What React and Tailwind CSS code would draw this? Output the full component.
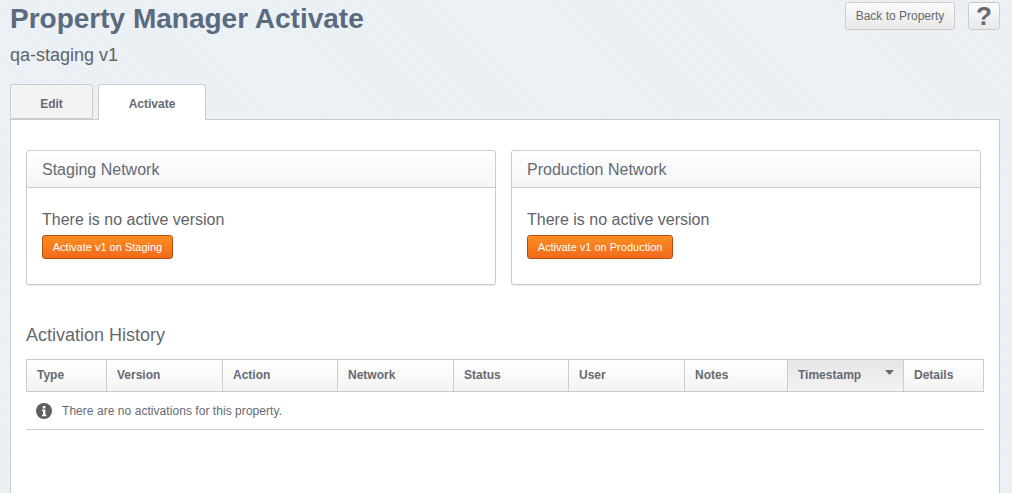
import React from 'react';

const columns = [
    { label: 'Type', width: 'w-[80px]' },
    { label: 'Version', width: 'w-[116px]' },
    { label: 'Action', width: 'w-[115px]' },
    { label: 'Network', width: 'w-[116px]' },
    { label: 'Status', width: 'w-[115px]' },
    { label: 'User', width: 'w-[116px]' },
    { label: 'Notes', width: 'w-[103px]' },
    { label: 'Timestamp', width: 'w-[116px]', sorted: true },
    { label: 'Details', width: 'flex-1' },
];

const NetworkCard = ({ title, buttonLabel, buttonWidth }) => (
    <div className="w-[470px] h-[135px] bg-white rounded-[3px] border border-[#cccccc] shadow-[0_1px_1px_rgba(0,0,0,0.08)]">
        <div className="h-[37px] border-b border-[#cccccc] pl-[15px] bg-gradient-to-b from-white to-[#f5f5f5] rounded-t-[3px] text-[16px] leading-[37px] text-[#666a73]">
            {title}
        </div>
        <div className="pl-[15px] pt-[22px]">
            <p className="text-[16px] leading-[20px] text-[#5f6369]">There is no active version</p>
            <button className={`${buttonWidth} h-[24px] mt-[5px] block rounded-[3px] border border-[#b5500c] bg-gradient-to-b from-[#fb8d22] to-[#f26a1c] text-white text-[11px] leading-[22px] text-center`}>
                {buttonLabel}
            </button>
        </div>
    </div>
);

const App = () => {
    return (
        <div className="w-[1012px] h-[493px] overflow-hidden font-['Liberation_Sans',Arial,sans-serif] bg-[#e9eff4] bg-[repeating-linear-gradient(45deg,#e7edf2_0px,#e7edf2_1px,#edf2f6_1px,#edf2f6_3px)]">
            {/* Header */}
            <div className="flex justify-between h-[84px] pl-[10px] pr-[12px]">
                <div>
                    <h1 className="text-[28px] leading-[38px] font-bold text-[#5a6b7f]">Property Manager Activate</h1>
                    <p className="text-[18px] leading-[22px] mt-[6px] text-[#60646a]">qa-staging v1</p>
                </div>
                <div className="flex gap-[13px] pt-[2px] items-start">
                    <button className="w-[110px] h-[28px] rounded-[3px] border border-[#cccccc] bg-gradient-to-b from-[#fbfbfb] to-[#e8e8e8] text-[12px] text-[#666a70]">
                        Back to Property
                    </button>
                    <button className="w-[32px] h-[28px] rounded-[3px] border border-[#cccccc] bg-gradient-to-b from-[#fbfbfb] to-[#e8e8e8] text-[26px] leading-[26px] font-bold text-[#666a70]">
                        ?
                    </button>
                </div>
            </div>

            {/* Tabs */}
            <div className="flex gap-[5px] h-[35px] pl-[10px] relative z-10">
                <div className="w-[83px] h-[35px] rounded-t-[3px] border border-[#cccccc] bg-[#f3f3f3] text-[12px] leading-[38px] font-bold text-center text-[#666a73]">
                    Edit
                </div>
                <div className="w-[108px] h-[36px] rounded-t-[3px] border border-b-0 border-[#cccccc] bg-white text-[12px] leading-[38px] font-bold text-center text-[#666a73]">
                    Activate
                </div>
            </div>

            {/* Panel */}
            <div className="ml-[10px] w-[990px] h-[400px] bg-white border border-[#cccccc] pl-[15px] pt-[30px]">
                <div className="flex gap-[15px]">
                    <NetworkCard title="Staging Network" buttonLabel="Activate v1 on Staging" buttonWidth="w-[131px]" />
                    <NetworkCard title="Production Network" buttonLabel="Activate v1 on Production" buttonWidth="w-[146px]" />
                </div>

                <h2 className="text-[18px] leading-[22px] mt-[39px] text-[#666a70]">Activation History</h2>

                {/* Table */}
                <div className="w-[958px] mt-[13px]">
                    <div className="flex h-[33px] border border-[#cccccc] bg-gradient-to-b from-white to-[#f3f3f3]">
                        {columns.map((col, i) => (
                            <div
                                key={col.label}
                                className={`${col.width} ${i < columns.length - 1 ? 'border-r border-[#cccccc]' : ''} ${col.sorted ? 'bg-gradient-to-b from-[#e6e6e6] to-[#f3f3f3] flex justify-between pr-[9px]' : ''} pl-[10px] text-[12px] leading-[31px] font-bold text-[#666a73]`}
                            >
                                <span>{col.label}</span>
                                {col.sorted && (
                                    <svg className="w-[9px] h-[5px] mt-[10px]" viewBox="0 0 9 5">
                                        <path d="M0 0h9L4.5 5z" fill="#666a70" />
                                    </svg>
                                )}
                            </div>
                        ))}
                    </div>
                    <div className="flex items-center h-[38px] pl-[10px] border-b border-[#cccccc]">
                        <svg className="w-[16px] h-[16px]" viewBox="0 0 16 16">
                            <circle cx="8" cy="8" r="8" fill="#5f5f5f" />
                            <rect x="6.8" y="3" width="2.6" height="2.4" fill="#ffffff" />
                            <path d="M6 6.6h3.4v5.2h1v1.4H6v-1.4h1V8H6z" fill="#ffffff" />
                        </svg>
                        <span className="ml-[10px] text-[12px] tracking-[0.05px] text-[#666a70]">There are no activations for this property.</span>
                    </div>
                </div>
            </div>
        </div>
    );
};

export default App;
